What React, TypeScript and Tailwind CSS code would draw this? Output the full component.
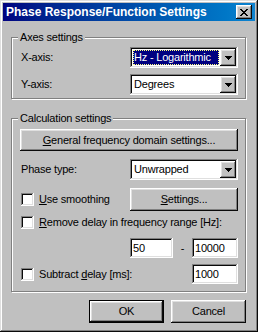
import React from 'react';

const raised =
  'shadow-[inset_-1px_-1px_#0a0a0a,inset_1px_1px_#ffffff,inset_-2px_-2px_#808080,inset_2px_2px_#dfdfdf]';
const sunken =
  'shadow-[inset_-1px_-1px_#ffffff,inset_1px_1px_#808080,inset_-2px_-2px_#dfdfdf,inset_2px_2px_#0a0a0a]';

function Arrow() {
  return (
    <svg width="7" height="4" shapeRendering="crispEdges">
      <rect x="0" y="0" width="7" height="1" fill="#000" />
      <rect x="1" y="1" width="5" height="1" fill="#000" />
      <rect x="2" y="2" width="3" height="1" fill="#000" />
      <rect x="3" y="3" width="1" height="1" fill="#000" />
    </svg>
  );
}

function Combo({ value, selected }: { value: string; selected?: boolean }) {
  return (
    <div className={`flex h-[21px] w-[108px] shrink-0 bg-white p-[2px] ${sunken}`}>
      <div className="flex flex-1 p-[1px]">
        {selected ? (
          <span className="flex flex-1 items-center bg-[#000080] pl-[1px] text-white outline-1 outline-dotted outline-[#ffff80] -outline-offset-1">
            {value}
          </span>
        ) : (
          <span className="flex flex-1 items-center pl-[1px]">{value}</span>
        )}
      </div>
      <div className={`flex w-[16px] items-center justify-center bg-[#c0c0c0] ${raised}`}>
        <Arrow />
      </div>
    </div>
  );
}

function Edit({ value, w }: { value: string; w: string }) {
  return (
    <div className={`flex h-[20px] shrink-0 items-center bg-white pl-[3px] ${w} ${sunken}`}>{value}</div>
  );
}

function Check() {
  return <span className={`h-[13px] w-[13px] shrink-0 bg-white ${sunken}`} />;
}

function Group({ title, children }: { title: string; children: React.ReactNode }) {
  return (
    <div className="relative border border-[#808080] shadow-[1px_1px_0_#ffffff,inset_1px_1px_0_#ffffff]">
      <span className="absolute left-[6px] top-[-8px] bg-[#c0c0c0] px-[2px] leading-[14px]">{title}</span>
      {children}
    </div>
  );
}

function XGlyph() {
  return (
    <svg width="8" height="7" shapeRendering="crispEdges">
      <path
        fill="#000"
        d="M0 0h2v1H0zM6 0h2v1H6zM1 1h2v1H1zM5 1h2v1H5zM2 2h4v1H2zM3 3h2v1H3zM2 4h4v1H2zM1 5h2v1H1zM5 5h2v1H5zM0 6h2v1H0zM6 6h2v1H6z"
      />
    </svg>
  );
}

export default function App() {
  return (
    <div
      className={`flex h-[332px] w-[258px] flex-col bg-[#c0c0c0] p-[3px] text-[11px] tracking-[-0.2px] text-black font-['Liberation_Sans',Arial,sans-serif] shadow-[inset_-1px_-1px_#0a0a0a,inset_1px_1px_#dfdfdf,inset_-2px_-2px_#808080,inset_2px_2px_#ffffff]`}
    >
      {/* title bar */}
      <div className="flex h-[18px] items-center justify-between bg-gradient-to-r from-[#000080] to-[#1084d0] pl-[3px] pr-[3px]">
        <span className="text-[12px] font-bold leading-none tracking-normal text-white">Phase Response/Function Settings</span>
        <div className={`flex h-[14px] w-[16px] items-center justify-center bg-[#c0c0c0] ${raised}`}>
          <XGlyph />
        </div>
      </div>

      <div className="flex flex-1 flex-col pl-[8px] pr-[9px]">
        <div className="mt-[16px]">
          <Group title="Axes settings">
            <div className="flex flex-col pb-[3px] pl-[8px] pr-[7px] pt-[9px]">
              <div className="flex h-[21px] items-center justify-between">
                <span className="pl-[1px]">X-axis:</span>
                <Combo value="Hz - Logarithmic" selected />
              </div>
              <div className="mt-[6px] flex h-[21px] items-center justify-between">
                <span className="pl-[1px]">Y-axis:</span>
                <Combo value="Degrees" />
              </div>
            </div>
          </Group>
        </div>

        <div className="mt-[19px]">
          <Group title="Calculation settings">
            <div className="flex flex-col pb-[7px] pl-[8px] pr-[7px] pt-[10px]">
              <button className={`flex h-[22px] w-full items-center justify-center bg-[#c0c0c0] ${raised}`}>
                <span>
                  <u>G</u>eneral frequency domain settings...
                </span>
              </button>
              <div className="mt-[8px] flex h-[21px] items-center justify-between">
                <span className="pl-[1px]">Phase type:</span>
                <Combo value="Unwrapped" />
              </div>
              <div className="mt-[8px] flex h-[23px] items-center justify-between">
                <div className="flex items-center gap-[5px] pl-[1px]">
                  <Check />
                  <span>
                    <u>U</u>se smoothing
                  </span>
                </div>
                <button className={`flex h-[23px] w-[108px] items-center justify-center bg-[#c0c0c0] ${raised}`}>
                  <span>
                    <u>S</u>ettings...
                  </span>
                </button>
              </div>
              <div className="mt-[5px] flex h-[13px] items-center gap-[5px] pl-[1px]">
                <Check />
                <span>
                  <u>R</u>emove delay in frequency range [Hz]:
                </span>
              </div>
              <div className="mt-[9px] flex h-[20px] items-center justify-end">
                <Edit value="50" w="w-[43px]" />
                <span className="w-[19px] text-center">-</span>
                <Edit value="10000" w="w-[46px]" />
              </div>
              <div className="mt-[6px] flex h-[20px] items-center justify-between">
                <div className="flex items-center gap-[5px] pl-[1px]">
                  <Check />
                  <span>
                    Subtract <u>d</u>elay [ms]:
                  </span>
                </div>
                <Edit value="1000" w="w-[46px]" />
              </div>
            </div>
          </Group>
        </div>

        <div className="mt-[8px] flex justify-end gap-[7px]">
          <button className={`flex h-[23px] w-[75px] items-center justify-center border border-black bg-[#c0c0c0] ${raised}`}>
            OK
          </button>
          <button className={`flex h-[23px] w-[75px] items-center justify-center bg-[#c0c0c0] ${raised}`}>
            Cancel
          </button>
        </div>
      </div>
    </div>
  );
}
